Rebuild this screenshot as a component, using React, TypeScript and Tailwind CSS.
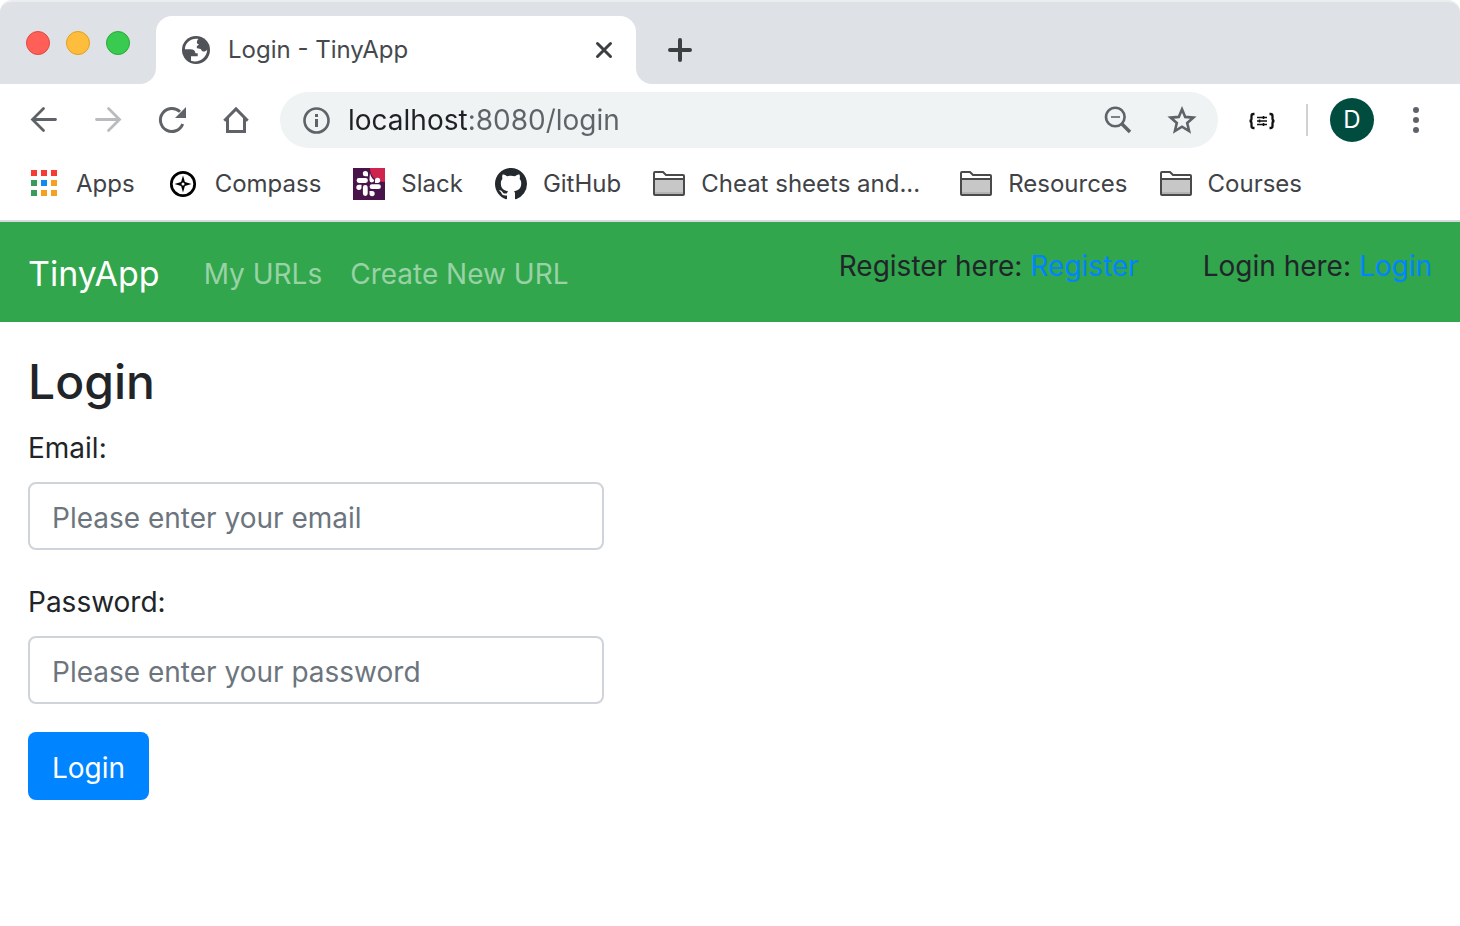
import React from "react";

type IconProps = { className?: string };

function Globe() {
  return (
    <svg className="h-7 w-7 shrink-0" viewBox="0 0 28 28" aria-hidden="true">
      <circle cx="14" cy="14" r="14" fill="#505358" />
      <path
        d="M16.500 3.100C10 1.500 3 6.500 2.900 13.300H8.500c3.200 0 4.700 1.200 4.900 3.900h2.300v3H9v4.600c8 2.600 16-3 16.200-11.300-1 1.600-2.600 2.300-4.200 2-1.600-.2-1.500-2-2.500-2.500-1.200-.4-3.500.1-3.800-1.400-.3-1.800 1.400-2.300 2.300-3.100-1.200-.3-2.300-.9-2.100-2.400.2-1.500.7-2.300 1.600-3z"
        fill="#fff"
      />
    </svg>
  );
}

function Arrow({ className = "" }: IconProps) {
  return (
    <svg className={`h-8 w-8 ${className}`} viewBox="0 0 32 32" fill="none" stroke="currentColor" strokeWidth="2.800" strokeLinecap="round" aria-hidden="true">
      <path d="M27.500 15.500H5M15.500 4.500l-11 11 11 11" />
    </svg>
  );
}

function Reload() {
  return (
    <svg className="h-8 w-8" viewBox="0 0 32 32" aria-hidden="true">
      <path d="M26.700 20A11.500 11.500 0 1 1 24 7.800" fill="none" stroke="#5f6368" strokeWidth="3" />
      <path d="M30 3v11H19z" fill="#5f6368" />
    </svg>
  );
}

function Home() {
  return (
    <svg className="h-8 w-8" viewBox="0 0 32 32" fill="none" stroke="#5f6368" strokeWidth="3" aria-hidden="true">
      <path d="M4.300 16.800L16 5l11.700 11.800M7.500 14v13.500h17V14" />
    </svg>
  );
}

function Info() {
  return (
    <svg className="h-8 w-8 shrink-0" viewBox="0 0 32 32" aria-hidden="true">
      <circle cx="16.500" cy="16.500" r="12" fill="none" stroke="#5f6368" strokeWidth="2.600" />
      <path d="M15 10h3v3h-3zM15 15h3v8h-3z" fill="#5f6368" />
    </svg>
  );
}

function ZoomOut() {
  return (
    <svg className="h-8 w-8" viewBox="0 0 32 32" fill="none" stroke="#5f6368" aria-hidden="true">
      <circle cx="13.300" cy="13" r="9.300" strokeWidth="2.600" />
      <path d="M20 20l8 8" strokeWidth="3.600" />
      <path d="M9 13h9" strokeWidth="1.600" />
    </svg>
  );
}

function Star() {
  return (
    <svg className="h-8 w-8" viewBox="0 0 32 32" fill="none" stroke="#5f6368" strokeWidth="2.600" aria-hidden="true">
      <path d="M16 5.300l3.200 7.600 8.200.7-6.200 5.400 1.900 8-7.100-4.300L8.900 27l1.900-8-6.200-5.400 8.200-.7z" />
    </svg>
  );
}

function BracesIcon() {
  return (
    <svg className="h-8 w-8" viewBox="0 0 32 32" fill="none" stroke="#111" aria-hidden="true">
      <path d="M8.500 10H7.500Q5.500 10 5.500 12v2.500Q5.500 17 3.500 17 5.500 17 5.500 19.500V22Q5.500 24 7.500 24h1M23.500 10h1Q26.500 10 26.500 12v2.500Q26.500 17 28.500 17 26.500 17 26.500 19.500V22Q26.500 24 24.500 24h-1" strokeWidth="2.300" />
      <path d="M11 13.500h10M11 17h10M11 20.500h10" strokeWidth="1.500" />
      <path d="M17.500 12v3M13.500 15.500v3M17.500 19v3" strokeWidth="1.600" />
    </svg>
  );
}

function AppsGrid() {
  const colors = ["#f83a35", "#f83a35", "#f83a35", "#389a5b", "#0b8cf0", "#f5a01f", "#389a5b", "#f5a01f", "#f5a01f"];
  return (
    <svg className="h-8 w-8" viewBox="0 0 32 32" aria-hidden="true">
      {colors.map((color, i) => (
        <rect key={i} x={3 + (i % 3) * 10} y={2 + Math.floor(i / 3) * 10} width="6" height="6" fill={color} />
      ))}
    </svg>
  );
}

function Compass() {
  return (
    <svg className="h-8 w-8" viewBox="0 0 32 32" aria-hidden="true">
      <circle cx="16" cy="16" r="11.700" fill="#fff" stroke="#000" strokeWidth="2.700" />
      <path d="M16 7.500l1.900 6.600 6.600 1.900-6.600 1.900L16 24.500l-1.900-6.600L7.500 16l6.600-1.900z" />
      <circle cx="16" cy="16" r="1.500" fill="#fff" />
    </svg>
  );
}

function Slack() {
  return (
    <svg className="h-8 w-8" viewBox="0 0 32 32" aria-hidden="true">
      <path fill="#481449" d="M0 0h32v32H0z" />
      <path fill="#d0244f" d="M17 0h15v14C24 14.500 17 9 17 0z" />
      <g fill="none" stroke="#fff" strokeWidth="4.800" strokeLinecap="round">
        <path d="M6 12.500h6.500M12.300 19.500v6M19 18.700h6.500" />
      </g>
      <path fill="#fff" d="M15 8.300h-2.500A2.600 2.600 0 1 1 15 5.700zM22 15v-2.500A2.600 2.600 0 1 1 24.600 15zM8.500 16.800v2.500A2.600 2.600 0 1 1 6 16.800zM16.500 23h2.600a2.600 2.600 0 1 1-2.600 2.600zM17 5c.5 3 2 5.500 4.300 7.200-.4 1.400-1.300 2.200-2.500 2.200a2.400 2.400 0 0 1-2.400-2.400z" />
    </svg>
  );
}

function GitHub() {
  return (
    <svg className="h-8 w-8" viewBox="0 0 16 16" fill="#24292e" aria-hidden="true">
      <path d="M8 0C3.580 0 0 3.580 0 8c0 3.540 2.290 6.530 5.470 7.590.4.070.55-.17.55-.38 0-.19-.01-.82-.01-1.490-2.010.37-2.530-.49-2.690-.94-.09-.23-.48-.94-.82-1.130-.28-.15-.68-.52-.01-.53.63-.01 1.080.58 1.230.82.72 1.210 1.870.87 2.330.66.07-.52.28-.87.51-1.070-1.780-.2-3.640-.89-3.640-3.950 0-.87.31-1.590.82-2.150-.08-.2-.36-1.020.08-2.120 0 0 .67-.21 2.200.82.64-.18 1.320-.27 2-.27s1.360.09 2 .27c1.530-1.040 2.200-.82 2.200-.82.44 1.100.16 1.920.08 2.120.51.56.82 1.270.82 2.150 0 3.070-1.870 3.750-3.650 3.950.29.25.54.73.54 1.480 0 1.070-.01 1.930-.01 2.200 0 .21.15.46.55.38A8.010 8.010 0 0 0 16 8c0-4.420-3.580-8-8-8z" />
    </svg>
  );
}

function Folder() {
  return (
    <svg className="h-8 w-8" viewBox="0 0 32 32" aria-hidden="true">
      <path d="M1 11h30v15H1z" fill="#c7c7c7" />
      <path d="M2 24h28v2H2z" fill="#b3b3b3" />
      <path d="M1 26V5q0-1 1-1h8l3 3h17q1 0 1 1v18q0 1-1 1H2q-1 0-1-1zM1 11h30" fill="none" stroke="#4a4a4a" strokeWidth="2" />
    </svg>
  );
}

function Bookmark({ icon, label, className = "" }: { icon: React.ReactNode; label: string; className?: string }) {
  return (
    <a href="#" className={`flex items-center gap-4 whitespace-nowrap ${className}`}>
      {icon}
      {label}
    </a>
  );
}

function Field({ id, type, label, placeholder }: { id: string; type: string; label: string; placeholder: string }) {
  return (
    <div className="flex flex-col gap-3">
      <label htmlFor={id} className="leading-[44px]">{label}</label>
      <input
        id={id}
        type={type}
        placeholder={placeholder}
        className="h-[68px] w-full rounded-lg border-2 border-[#ced4da] bg-white px-[22px] pt-1 placeholder:text-[#6c757d]"
      />
    </div>
  );
}

export default function App() {
  return (
    <div className="min-h-screen bg-white font-['Inter','Liberation_Sans',sans-serif] text-[#212529]">
      <header>
        <div className="flex h-[84px] items-end rounded-t-xl border-t-2 border-[#ebedef] bg-[#dee1e6]">
          <div className="flex shrink-0 gap-4 self-start pt-[29px] pl-[26px]">
            <button aria-label="Close window" className="h-6 w-6 rounded-full border border-[#e2463f] bg-[#ff5f57]" />
            <button aria-label="Minimize window" className="h-6 w-6 rounded-full border border-[#e1a116] bg-[#ffbd3d]" />
            <button aria-label="Zoom window" className="h-6 w-6 rounded-full border border-[#27aa35] bg-[#38cb4f]" />
          </div>
          <svg className="ml-[10px] h-4 w-4 shrink-0" viewBox="0 0 16 16" fill="#fff" aria-hidden="true">
            <path d="M16 0v16H0A16 16 0 0 0 16 0z" />
          </svg>
          <div className="flex h-[68px] w-[480px] items-center rounded-t-2xl bg-white pr-5 pl-[26px]">
            <Globe />
            <span className="ml-[18px] flex-1 text-2xl text-[#45494d]">Login - TinyApp</span>
            <button aria-label="Close tab" className="flex h-6 w-6 items-center justify-center">
              <svg className="h-6 w-6" viewBox="0 0 24 24" stroke="#3c4043" strokeWidth="3" strokeLinecap="round" aria-hidden="true">
                <path d="M5.500 5.500l13 13M18.500 5.500l-13 13" />
              </svg>
            </button>
          </div>
          <svg className="h-4 w-4 shrink-0" viewBox="0 0 16 16" fill="#fff" aria-hidden="true">
            <path d="M0 0v16h16A16 16 0 0 1 0 0z" />
          </svg>
          <button aria-label="New tab" className="mb-5 ml-3 flex h-7 w-8 items-center justify-center">
            <svg className="h-7 w-7" viewBox="0 0 28 28" stroke="#3c4043" strokeWidth="4" strokeLinecap="round" aria-hidden="true">
              <path d="M14 4v20M4 14h20" />
            </svg>
          </button>
        </div>

        <div className="flex h-[72px] items-center pr-[26px] pl-7 text-[#5f6368]">
          <div className="flex shrink-0 gap-8">
            <button aria-label="Back"><Arrow /></button>
            <button aria-label="Forward"><Arrow className="-scale-x-100 text-[#b9bbbe]" /></button>
            <button aria-label="Reload"><Reload /></button>
            <button aria-label="Home"><Home /></button>
          </div>
          <div className="ml-7 flex h-14 min-w-0 flex-1 items-center rounded-full bg-[#eff3f4] pr-5 pl-5">
            <Info />
            <input
              aria-label="Address"
              defaultValue="localhost:8080/login"
              className="ml-4 min-w-0 flex-1 bg-[linear-gradient(to_right,#202124_119px,#5f6368_119px)] bg-clip-text text-[28px] text-transparent caret-black"
            />
            <button aria-label="Zoom out"><ZoomOut /></button>
            <button aria-label="Bookmark this page" className="ml-8"><Star /></button>
          </div>
          <button aria-label="JSON formatter" className="ml-7"><BracesIcon /></button>
          <span className="ml-7 h-8 w-[2px] bg-[#cfd1d3]" />
          <button aria-label="Profile" className="ml-[22px] h-11 w-11 shrink-0 rounded-full bg-[#004d40] text-2xl text-white">D</button>
          <button aria-label="Menu" className="ml-7">
            <svg className="h-8 w-8" viewBox="0 0 32 32" fill="#5f6368" aria-hidden="true">
              <circle cx="14" cy="6" r="3" /><circle cx="14" cy="16" r="3" /><circle cx="14" cy="26" r="3" />
            </svg>
          </button>
        </div>

        <nav aria-label="Bookmarks" className="flex h-[66px] items-start gap-8 border-b-2 border-[#d6dae0] pt-3 pl-7 text-2xl text-[#3f4347]">
          <Bookmark icon={<AppsGrid />} label="Apps" />
          <Bookmark icon={<Compass />} label="Compass" />
          <Bookmark icon={<Slack />} label="Slack" />
          <Bookmark icon={<GitHub />} label="GitHub" />
          <Bookmark icon={<Folder />} label="Cheat sheets and..." className="pr-2" />
          <Bookmark icon={<Folder />} label="Resources" />
          <Bookmark icon={<Folder />} label="Courses" />
        </nav>
      </header>

      <nav aria-label="Main" className="flex h-[100px] items-center bg-[#31a64c] px-7 text-[28px] whitespace-nowrap">
        <a href="#" className="pt-0.5 text-[34px] text-white">TinyApp</a>
        <a href="#" className="ml-11 pt-1 text-white/50">My URLs</a>
        <a href="#" className="ml-7 pt-1 text-white/50">Create New URL</a>
        <div className="ml-auto flex gap-16 self-start pt-[23px] leading-[42px]">
          <p>Register here: <a href="#" className="text-[#0084ff]">Register</a></p>
          <p>Login here: <a href="#" className="text-[#0084ff]">Login</a></p>
        </div>
      </nav>

      <main className="px-7 pt-7 text-[28px]">
        <h1 className="text-5xl leading-[64px] font-medium">Login</h1>
        <form className="mt-3 flex max-w-[576px] flex-col gap-7" onSubmit={(e) => e.preventDefault()}>
          <div className="flex flex-col gap-[30px]">
            <Field id="email" type="email" label="Email:" placeholder="Please enter your email" />
            <Field id="password" type="password" label="Password:" placeholder="Please enter your password" />
          </div>
          <button type="submit" className="h-[68px] self-start rounded-lg bg-[#0084ff] px-6 pt-1 text-white">Login</button>
        </form>
      </main>
    </div>
  );
}
